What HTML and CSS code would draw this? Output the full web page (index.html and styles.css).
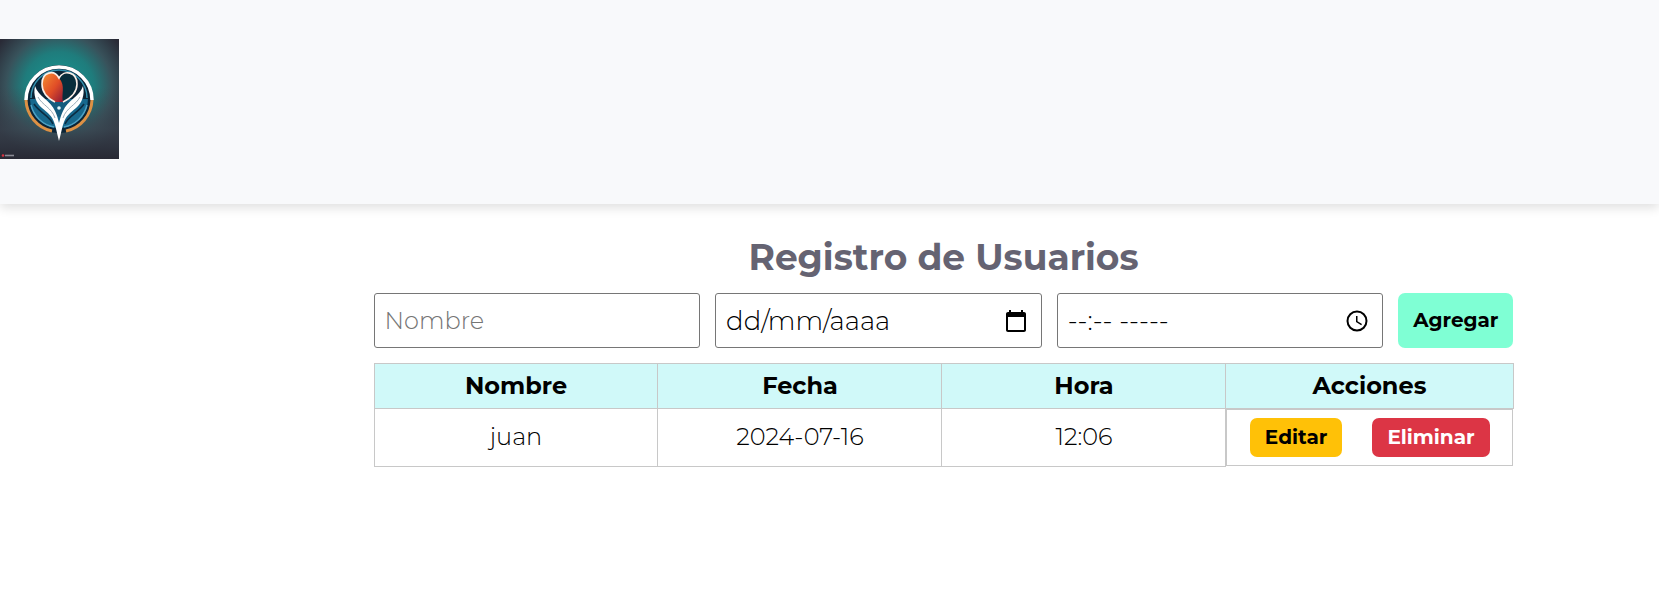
FILE: index.html
```html
<!DOCTYPE html>
<html lang="es">
<head>
<meta charset="utf-8">
<title>Registro de Usuarios</title>
<link rel="stylesheet" href="styles.css">
</head>
<body>
<header class="topbar">
  <svg class="logo" viewBox="0 0 119 120" role="img" aria-label="Logo">
    <defs>
      <radialGradient id="bg" cx="59" cy="48" r="78" gradientUnits="userSpaceOnUse">
        <stop offset="0" stop-color="#159a96"/>
        <stop offset="0.45" stop-color="#1f7c7c"/>
        <stop offset="0.68" stop-color="#38525b"/>
        <stop offset="0.95" stop-color="#292a36"/>
      </radialGradient>
      <linearGradient id="shade" x1="0" y1="0" x2="0" y2="1">
        <stop offset="0.4" stop-color="#3c4650" stop-opacity="0"/>
        <stop offset="0.75" stop-color="#3a4550" stop-opacity="0.7"/>
        <stop offset="1" stop-color="#282934" stop-opacity="1"/>
      </linearGradient>
      <linearGradient id="warm" x1="0" y1="0" x2="1" y2="1">
        <stop offset="0.1" stop-color="#f2842f"/>
        <stop offset="0.55" stop-color="#e04d27"/>
        <stop offset="1" stop-color="#8e1838"/>
      </linearGradient>
    </defs>
    <rect width="119" height="120" fill="url(#bg)"/>
    <rect width="119" height="120" fill="url(#shade)"/>
    <circle cx="59" cy="60" r="34" fill="#0b2537"/>
    <path d="M30 60a29 29 0 0 0 58 0z" fill="#17688d"/>
    <path d="M31 59a28 28 0 0 1 56 0" fill="none" stroke="#3390ad" stroke-width="1.5"/>
    <path d="M31 66a29 29 0 0 0 23 22M87 66a29 29 0 0 1-23 22" fill="none" stroke="#4ba0c3" stroke-width="1.500"/>
    <path d="M26 61a33 33 0 0 1 66 0" fill="none" stroke="#fff" stroke-width="3.500"/>
    <path d="M26 61a33 33 0 0 0 26 31M92 61a33 33 0 0 1-26 31" fill="none" stroke="#dc9145" stroke-width="3"/>
    <path d="M46 62h26l-6 12-7 4-7-4z" fill="#155c7e"/>
    <path d="M59 39C64 30 77 33 77 45C77 54 69 60 63 63H61z" fill="#092d3b"/>
    <path d="M59 39C54 30 42 33 42 45C42 54 49 60 55 63H63C61 55 66 47 59 39z" fill="url(#warm)"/>
    <path d="M55 63C49 60 42 54 42 45C42 33 54 30 59 39C64 30 77 33 77 45C77 54 69 60 63 63" fill="none" stroke="#fbeee6" stroke-width="1.600"/>
    <path d="M35 47C38 57 51 62 55 72C57 76 58 80 59 84C60 80 61 76 63 72C67 62 80 57 83 47C85 56 82 64 76 69C70 74 66 77 64 83C62 88 61 95 59 102C57 95 56 88 54 83C52 77 48 74 42 69C36 64 33 56 35 47z" fill="#fff"/>
    <path d="M38 58C42 66 52 69 55 79M80 58C76 66 66 69 63 79" fill="none" stroke="#8198a6" stroke-width="0.800"/>
    <path d="M34 65C40 74 50 77 53 85M84 65C78 74 68 77 65 85" fill="none" stroke="#0b2c42" stroke-width="1.600"/>
    <circle cx="59" cy="69" r="1.800" fill="#e4f6fa"/>
    <circle cx="3" cy="116.500" r="1.300" fill="#d93442"/>
    <path d="M5 116.500h9" stroke="#8b8b95" stroke-width="1.600"/>
  </svg>
</header>
<main class="content">
  <div class="panel">
    <h1 class="title">Registro de Usuarios</h1>
    <form class="form">
      <div class="field">
        <input class="input input-name" type="text" placeholder="Nombre" aria-label="Nombre">
      </div>
      <div class="field">
        <input class="input input-time" type="text" placeholder="dd/mm/aaaa" aria-label="Fecha">
        <button class="picker" type="button" aria-label="Elegir fecha">
          <svg class="picker-icon" viewBox="0 0 24 24"><path fill-rule="evenodd" d="M20 3h-1V1h-2v2H7V1H5v2H4c-1.100 0-2 .9-2 2v16c0 1.100.9 2 2 2h16c1.100 0 2-.9 2-2V5c0-1.100-.9-2-2-2zM20 21H4V8h16z"/></svg>
        </button>
      </div>
      <div class="field">
        <input class="input input-time" type="text" placeholder="--:-- -----" aria-label="Hora">
        <button class="picker" type="button" aria-label="Elegir hora">
          <svg class="picker-icon" viewBox="0 0 24 24"><path d="M12 1.500a10.500 10.500 0 1 0 0 21 10.500 10.500 0 0 0 0-21zm0 19a8.500 8.500 0 1 1 0-17 8.500 8.500 0 0 1 0 17zM12.500 7H11v6l5.200 3.200.8-1.300-4.500-2.700z"/></svg>
        </button>
      </div>
      <button class="btn btn-add" type="submit">Agregar</button>
    </form>
    <table class="table">
      <thead>
        <tr><th>Nombre</th><th>Fecha</th><th>Hora</th><th class="col-actions">Acciones</th></tr>
      </thead>
      <tbody>
        <tr>
          <td>juan</td><td>2024-07-16</td><td>12:06</td>
          <td class="actions">
            <button class="btn btn-edit" type="button">Editar</button>
            <button class="btn btn-delete" type="button">Eliminar</button>
          </td>
        </tr>
      </tbody>
    </table>
  </div>
</main>
</body>
</html>
```
FILE: styles.css
```css
* {
  box-sizing: border-box;
}

body {
  margin: 0;
  background: #fff;
  color: #000;
  font-family: Montserrat, Inter, "Open Sans", sans-serif;
  font-size: 24px;
  font-weight: 300;
  line-height: 28px;
}

.topbar {
  padding: 39px 0 45px;
  background: #f8f9fb;
  box-shadow: 0 4px 10px rgba(0, 0, 0, 0.12);
}

.logo {
  display: block;
  width: 119px;
  height: 120px;
}

.content {
  padding: 31px 0 31px 228px;
}

.panel {
  max-width: 1140px;
  margin: 0 auto;
}

.title {
  margin: 0 0 14px;
  color: #656372;
  font-size: 36px;
  font-weight: 700;
  line-height: 44px;
  text-align: center;
}

.form {
  display: flex;
  gap: 15px;
  margin-bottom: 15px;
}

.field {
  display: flex;
  flex: 1;
  align-items: center;
  min-width: 0;
  height: 55px;
  padding: 0 13px 0 10px;
  border: 1px solid #767676;
  border-radius: 3px;
}

.input {
  flex: 1;
  min-width: 0;
  padding: 0;
  border: 0;
  outline: 0;
  background: none;
  font: inherit;
}

.input::placeholder {
  color: #000;
  opacity: 1;
}

.input-name::placeholder {
  color: #757575;
}

.input-time {
  font-size: 26px;
}

.picker {
  padding: 0;
  border: 0;
  background: none;
}

.picker-icon {
  display: block;
  width: 24px;
  height: 24px;
}

.btn {
  padding: 8px 15px;
  border: 0;
  border-radius: 7px;
  color: #000;
  font-family: inherit;
  font-size: 20px;
  font-weight: 700;
  line-height: 23px;
}

.btn-add {
  background: #7fffd4;
}

.btn-edit {
  background: #ffc107;
}

.btn-delete {
  background: #dc3545;
  color: #fff;
}

.table {
  width: 100%;
  border-collapse: collapse;
  table-layout: fixed;
  text-align: center;
}

.table th,
.table td {
  padding: 8px;
  border: 1px solid #c8c8c8;
}

.table th {
  background: #d0f9f9;
  font-weight: 700;
}

.table .col-actions {
  width: 25.2%;
}

.table .actions {
  display: flex;
  justify-content: center;
  gap: 30px;
}
```
